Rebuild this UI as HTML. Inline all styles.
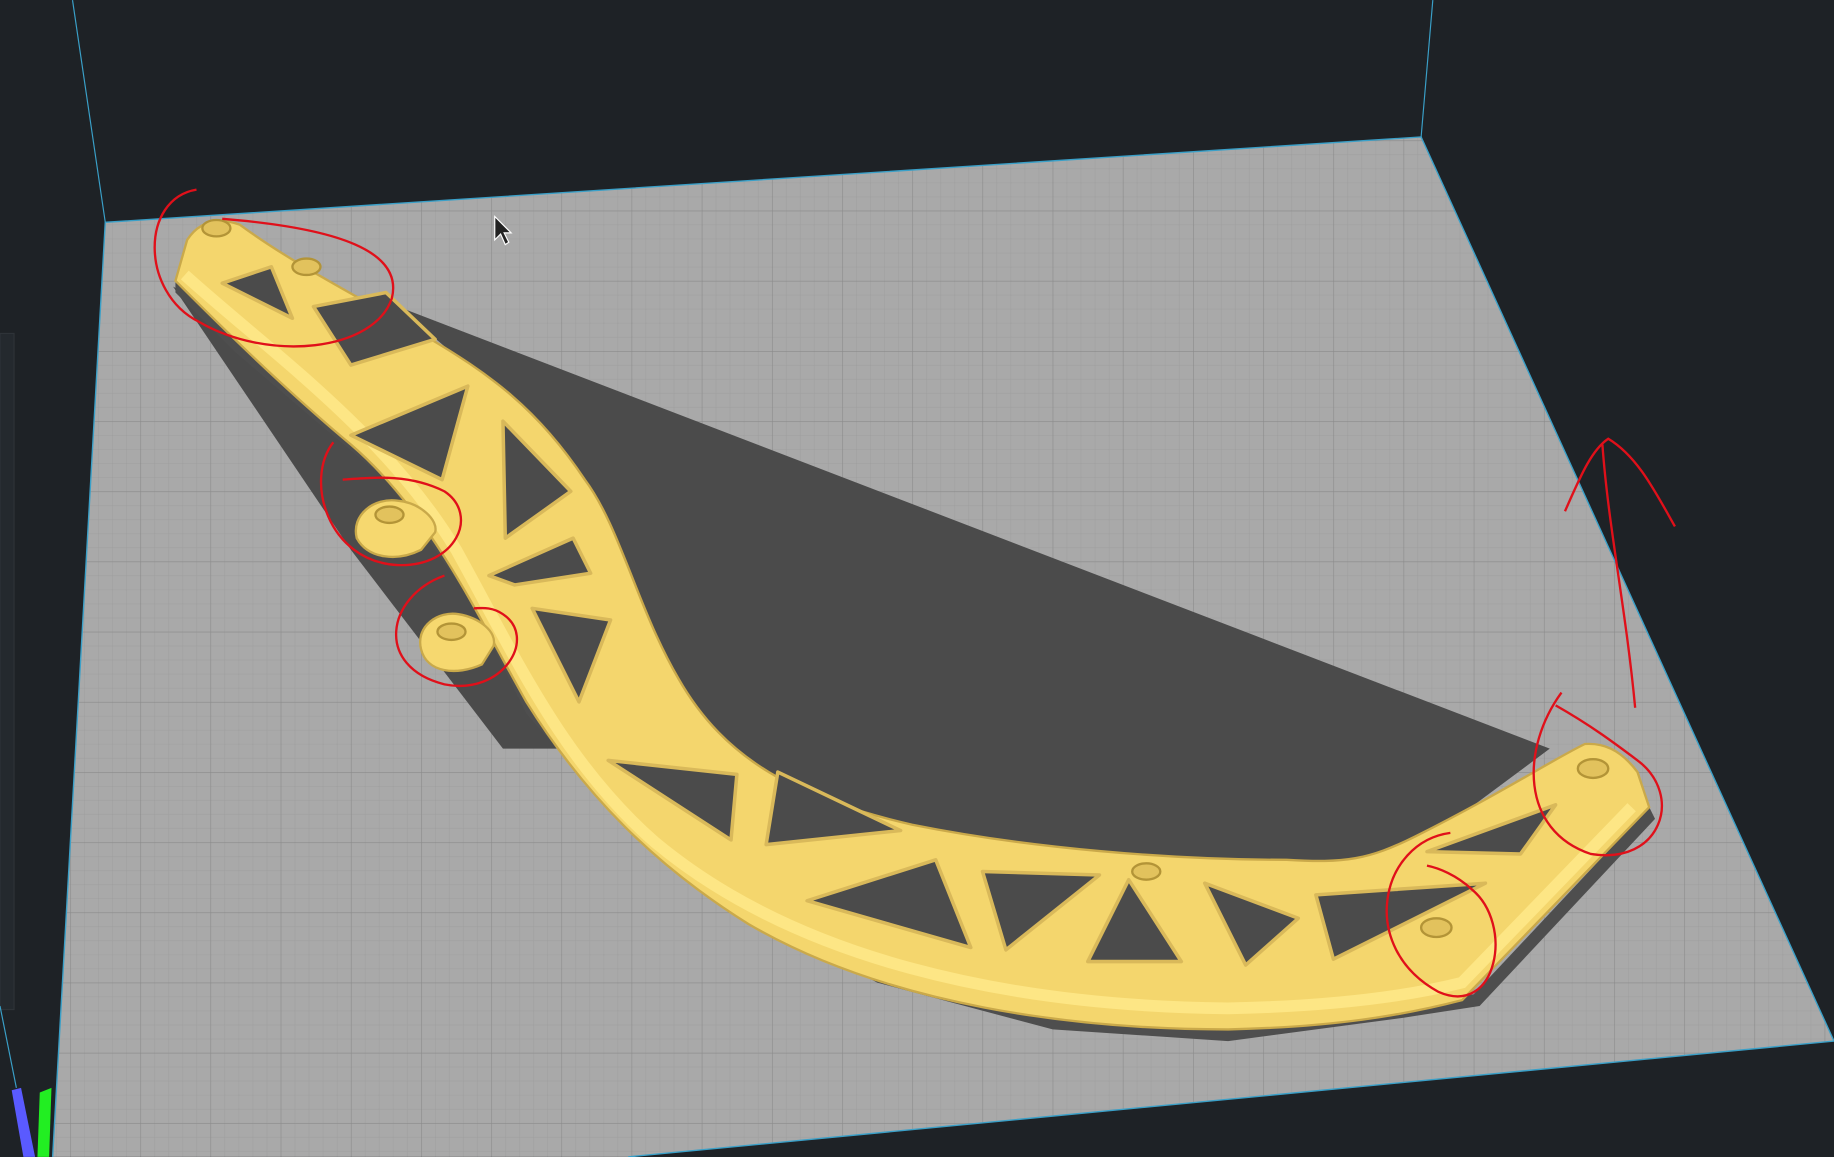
<!DOCTYPE html>
<html><head><style>
html,body{margin:0;padding:0;background:#1e2226;overflow:hidden}
svg{display:block}
</style></head><body>
<svg width="1834" height="1157" viewBox="0 0 1568 989" xmlns="http://www.w3.org/2000/svg">
<defs>
<pattern id="g" width="12" height="12" patternUnits="userSpaceOnUse">
<rect width="12" height="12" fill="#a9a9a9"/>
<path d="M0 0H12M0 0V12" stroke="#9a9a9a" stroke-width="0.6"/>
</pattern>
<pattern id="G" width="60" height="60" patternUnits="userSpaceOnUse">
<rect width="60" height="60" fill="url(#g)"/>
<path d="M0 0H60M0 0V60" stroke="#8a8a8a" stroke-width="1"/>
</pattern>
<clipPath id="plate"><polygon points="90,190 1215,117 1568,890 537,989 45,989"/></clipPath>
</defs>
<rect width="1568" height="989" fill="#1e2226"/>
<rect x="0" y="285" width="12" height="578" fill="#24292e" stroke="#2e3338"/>
<line x1="62" y1="0" x2="90" y2="190" stroke="#3aa0c8" stroke-width="1"/>
<line x1="1225" y1="0" x2="1215" y2="117" stroke="#3aa0c8" stroke-width="1"/>
<polygon points="90,190 1215,117 1568,890 537,989 45,989" fill="url(#G)"/>
<polyline points="45,989 90,190 1215,117 1568,890 537,989" fill="none" stroke="#3aa0c8" stroke-width="1.2"/>
<g clip-path="url(#plate)">
<polygon points="340,262 1325,640 1150,770 700,730 500,520 420,330" fill="#4b4b4b"/>
<polygon points="148,245 300,470 430,640 480,640 420,480 250,300" fill="#4b4b4b"/>
<path d="M150,250 L200,300 L270,360 L330,410 L400,510 L450,610 L520,690 L620,770 L750,840 L900,880 L1050,890 L1200,870 L1265,860 L1415,700 L1410,690 L1260,850 L1200,860 L1050,880 L900,870 L750,830 L620,760 L520,680 L450,600 L400,500 L330,400 L270,350 L200,290 L150,240 Z" fill="#4e4e4e"/>
</g>
<path d="M150,240 C180,270 240,330 300,380 C370,440 410,530 450,600 C500,680 560,740 640,790 C760,860 920,880 1050,880 C1140,878 1200,868 1250,855 L1410,690 L1400,660 C1385,640 1370,635 1355,636 C1330,648 1280,680 1210,715 C1170,735 1150,738 1100,735 C1000,735 880,725 780,705 C680,682 620,650 580,580 C545,520 530,450 500,410 C460,350 420,320 360,285 C300,250 250,225 205,192 C185,185 170,190 160,205 Z" fill="#f4d66d" stroke="#caa94a" stroke-width="2"/>
<path d="M158,235 C230,300 330,370 390,470 C440,560 480,650 560,720 C680,820 860,860 1050,862 C1150,860 1210,850 1250,840 L1395,690" fill="none" stroke="#fde685" stroke-width="10"/>
<g fill="#4b4b4b" stroke="#d9b95a" stroke-width="3" stroke-linejoin="round">
<polygon points="190,242 232,228 250,272"/>
<polygon points="268,262 330,250 372,290 300,312"/>
<polygon points="300,372 400,330 378,410"/>
<polygon points="430,360 488,420 432,460"/>
<polygon points="418,492 490,460 505,490 440,500"/>
<polygon points="455,520 522,530 495,600"/>
<polygon points="520,650 630,662 625,718"/>
<polygon points="665,660 770,710 655,722"/>
<polygon points="690,770 800,735 830,810"/>
<polygon points="840,745 940,748 860,812"/>
<polygon points="965,752 1010,822 930,822"/>
<polygon points="1030,755 1110,785 1065,825"/>
<polygon points="1125,765 1270,755 1140,820"/>
<polygon points="1220,728 1330,688 1300,730"/>
</g>
<g fill="#f6d86f" stroke="#c9a94a" stroke-width="2">
<path d="M305,460 C300,440 320,425 340,428 C360,430 375,445 372,455 L360,470 C340,480 315,478 305,460 Z"/>
<path d="M360,555 C355,535 375,522 392,525 C410,528 425,540 422,552 L412,568 C390,578 365,575 360,555 Z"/>
</g>
<g fill="#e2c25d" stroke="#b39437" stroke-width="2">
<ellipse cx="185" cy="195" rx="12" ry="7"/><ellipse cx="262" cy="228" rx="12" ry="7"/>
<ellipse cx="333" cy="440" rx="12" ry="7"/><ellipse cx="386" cy="540" rx="12" ry="7"/>
<ellipse cx="1362" cy="657" rx="13" ry="8"/><ellipse cx="1228" cy="793" rx="13" ry="8"/>
<ellipse cx="980" cy="745" rx="12" ry="7"/>
</g>
<g fill="none" stroke="#e0101a" stroke-width="2">
<path d="M168,162 C120,170 120,250 170,275 C230,310 320,300 335,255 C345,215 290,195 190,187"/>
<path d="M285,378 C260,410 280,480 340,483 C390,485 410,440 380,420 C350,405 320,408 293,410"/>
<path d="M380,492 C330,510 320,570 380,585 C430,595 460,545 430,525 C420,518 410,520 405,520"/>
<path d="M1240,712 C1180,720 1160,810 1230,848 C1280,870 1295,790 1258,760 C1245,748 1230,742 1220,740"/>
<path d="M1335,592 C1300,640 1300,710 1360,730 C1420,740 1440,680 1400,650 C1380,635 1360,620 1330,603"/>
<path d="M1398,605 C1390,520 1375,450 1370,380 M1338,437 C1350,410 1360,385 1375,375 C1400,390 1415,420 1432,450"/>
</g>
<path d="M423,185 L423,205 L428,200 L432,209 L435,207 L431,199 L437,199 Z" fill="#222" stroke="#fff" stroke-width="1"/>
<polygon points="10,932 18,930 30,989 20,989" fill="#5a5aff"/>
<polygon points="34,934 44,930 42,989 32,989" fill="#22ee22"/>
<line x1="0" y1="860" x2="14" y2="930" stroke="#3aa0c8" stroke-width="1"/>
</svg>
</body></html>
